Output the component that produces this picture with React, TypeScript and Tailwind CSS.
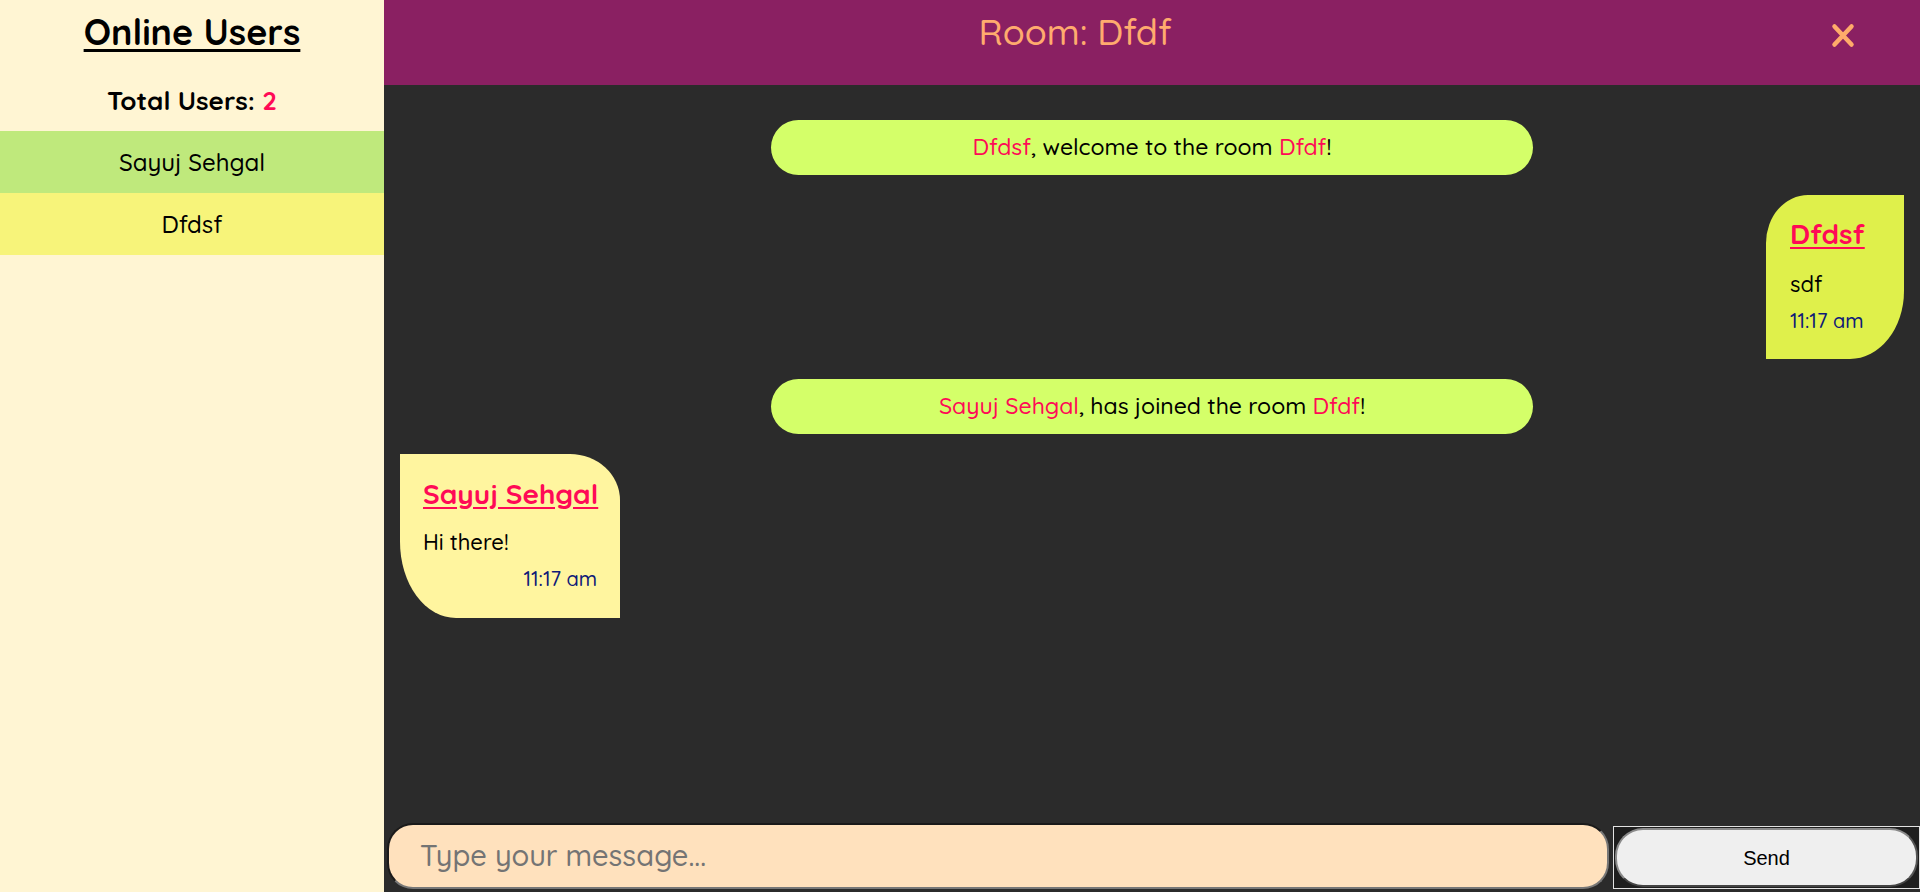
import React from "react";

const qs = "font-['Quicksand','Lato',sans-serif]";

function XIcon() {
  return (
    <svg width="24" height="25" viewBox="0 0 24 25" fill="none">
      <path d="M3.5 3.5 L20.5 21.5 M20.5 3.5 L3.5 21.5" stroke="#ffab6a" strokeWidth="4.5" strokeLinecap="round" />
    </svg>
  );
}

export default function App() {
  return (
    <div className={`flex w-[1920px] h-[892px] overflow-hidden font-medium ${qs}`}>
      {/* Sidebar */}
      <aside className="w-[384px] shrink-0 bg-[#fff5d3] flex flex-col">
        <h2 className="pt-[10px] text-center text-[36px] leading-[1.2] font-bold text-black underline decoration-[3px] underline-offset-[4px]">
          Online Users
        </h2>
        <div className="mt-[32px] text-center text-[26px] leading-[1.2] font-bold text-black">
          Total Users: <span className="text-[#ff0a56]">2</span>
        </div>
        <ul className="mt-[15px] flex flex-col">
          <li className="h-[62px] flex items-center justify-center bg-[#bfe97c] text-[24px] text-black">
            Sayuj Sehgal
          </li>
          <li className="h-[62px] flex items-center justify-center bg-[#f7f47a] text-[24px] text-black">
            Dfdsf
          </li>
        </ul>
      </aside>

      {/* Main */}
      <main className="flex-1 flex flex-col bg-[#2b2b2b]">
        <header className="h-[85px] shrink-0 bg-[#8a2062] flex">
          <h1 className="w-[90%] pt-[10px] text-center text-[36px] leading-[1.2] font-medium text-[#ffab6e]">
            Room: Dfdf
          </h1>
          <div className="w-[10%] flex items-start justify-center pt-[23px]">
            <XIcon />
          </div>
        </header>

        <section className="flex-1 flex flex-col gap-5 pt-[35px] px-4 overflow-hidden">
          <div className="self-center w-[762px] h-[55px] rounded-full bg-[#d4ff69] flex items-center justify-center text-[23px] text-black">
            <span>
              <span className="text-[#ff0a56]">Dfdsf</span>, welcome to the room{" "}
              <span className="text-[#ff0a56]">Dfdf</span>!
            </span>
          </div>

          <div className="self-end w-[138px] h-[164px] bg-[#dff04b] rounded-tl-[42px_48px] rounded-br-[54px_68px] pl-[24px] pt-[22px]">
            <div className="text-[28px] leading-[1.2] font-bold text-[#ff0a56] underline underline-offset-[3px]">Dfdsf</div>
            <div className="mt-[20px] text-[22px] leading-[1.2] text-black">sdf</div>
            <div className="mt-[12px] text-[20px] leading-[1.2] text-[#0f1a78]">11:17 am</div>
          </div>

          <div className="self-center w-[762px] h-[55px] rounded-full bg-[#d4ff69] flex items-center justify-center text-[23px] text-black">
            <span>
              <span className="text-[#ff0a56]">Sayuj Sehgal</span>, has joined the room{" "}
              <span className="text-[#ff0a56]">Dfdf</span>!
            </span>
          </div>

          <div className="self-start w-[220px] h-[164px] bg-[#fff59f] rounded-tr-[50px_46px] rounded-bl-[56px_76px] px-[23px] pt-[23px]">
            <div className="text-[28px] leading-[1.2] font-bold text-[#ff0a56] underline underline-offset-[3px] whitespace-nowrap">
              Sayuj Sehgal
            </div>
            <div className="mt-[18px] text-[22px] leading-[1.2] text-black">Hi there!</div>
            <div className="mt-[12px] text-right text-[20px] leading-[1.2] text-[#0f1a78]">11:17 am</div>
          </div>
        </section>

        <footer className="h-[70px] shrink-0 flex gap-[4px] pl-[3px] pt-[1px] pb-[3px] bg-[#2b2b2b]">
          <input
            type="text"
            placeholder="Type your message..."
            className={`flex-1 min-w-0 rounded-[26px] bg-[#ffe1bd] border-2 border-t-[#1a1a1a] border-l-[#1a1a1a] border-b-[#777777] border-r-[#777777] pl-[31px] text-[29px] font-medium text-black placeholder:text-[#747474] outline-none ${qs}`}
          />
          <div className="w-[307px] mt-[3px] border border-[#e2e2e2] bg-[#1e1e1e] p-[1px] flex">
            <button className="flex-1 rounded-[28px] bg-[#efefef] border-2 border-t-[#8a8a8a] border-l-[#8a8a8a] border-b-[#444444] border-r-[#555555] font-['Liberation_Sans',Arial,sans-serif] font-normal text-[20px] text-black">
              Send
            </button>
          </div>
        </footer>
      </main>
    </div>
  );
}
